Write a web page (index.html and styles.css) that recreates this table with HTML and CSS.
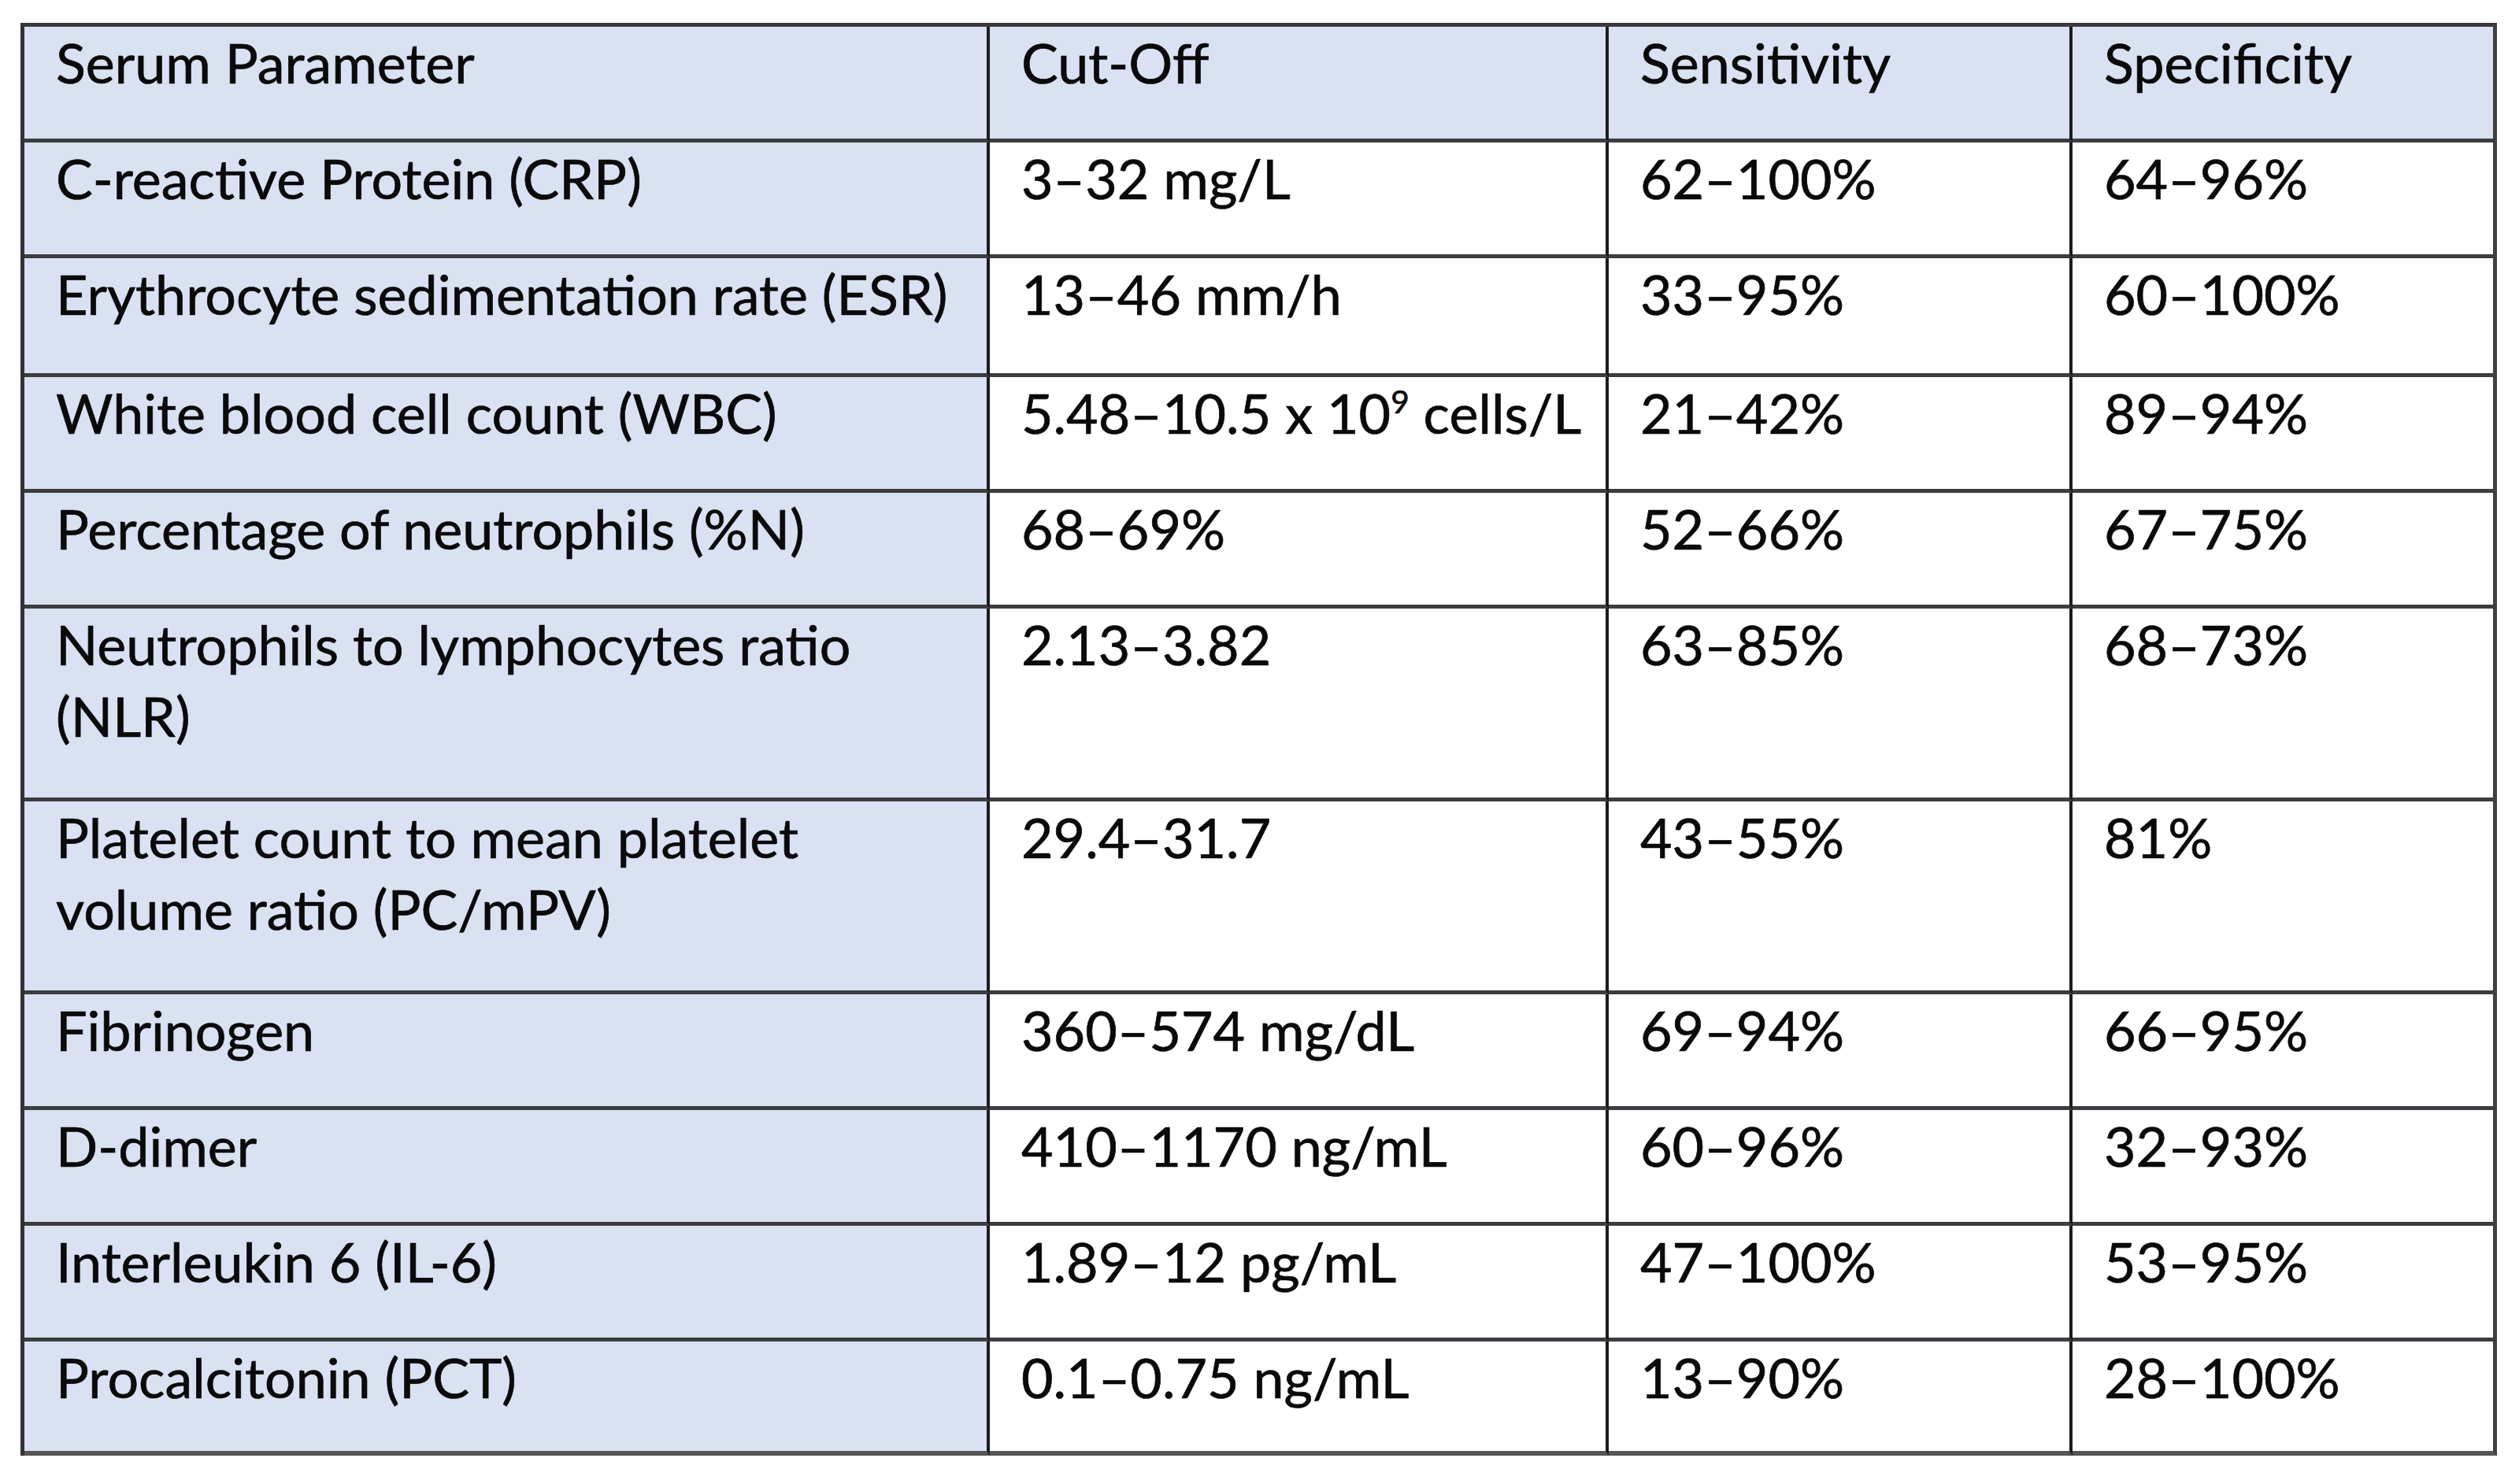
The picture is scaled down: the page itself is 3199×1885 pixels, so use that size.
FILE: index.html
```html
<!DOCTYPE html>
<html lang="en">
<head>
<meta charset="utf-8">
<title>Serum Parameters</title>
<link rel="stylesheet" href="styles.css">
</head>
<body>
<main class="page">
  <table class="params">
    <colgroup>
      <col class="c-param">
      <col class="c-cut">
      <col class="c-sens">
      <col class="c-spec">
    </colgroup>
    <thead>
      <tr>
        <th>Serum Parameter</th>
        <th>Cut-Off</th>
        <th>Sensitivity</th>
        <th>Specificity</th>
      </tr>
    </thead>
    <tbody>
      <tr>
        <td>C-reactive Protein (CRP)</td>
        <td>3–32 mg/L</td>
        <td>62–100%</td>
        <td>64–96%</td>
      </tr>
      <tr class="wide">
        <td>Erythrocyte sedimentation rate (ESR)</td>
        <td>13–46 mm/h</td>
        <td>33–95%</td>
        <td>60–100%</td>
      </tr>
      <tr>
        <td>White blood cell count (WBC)</td>
        <td>5.48–10.5 x 10<sup class="exp">9</sup> cells/L</td>
        <td>21–42%</td>
        <td>89–94%</td>
      </tr>
      <tr>
        <td>Percentage of neutrophils (%N)</td>
        <td>68–69%</td>
        <td>52–66%</td>
        <td>67–75%</td>
      </tr>
      <tr class="tall">
        <td>Neutrophils to lymphocytes ratio (NLR)</td>
        <td>2.13–3.82</td>
        <td>63–85%</td>
        <td>68–73%</td>
      </tr>
      <tr class="tall">
        <td>Platelet count to mean platelet volume ratio (PC/mPV)</td>
        <td>29.4–31.7</td>
        <td>43–55%</td>
        <td>81%</td>
      </tr>
      <tr>
        <td>Fibrinogen</td>
        <td>360–574 mg/dL</td>
        <td>69–94%</td>
        <td>66–95%</td>
      </tr>
      <tr>
        <td>D-dimer</td>
        <td>410–1170 ng/mL</td>
        <td>60–96%</td>
        <td>32–93%</td>
      </tr>
      <tr>
        <td>Interleukin 6 (IL-6)</td>
        <td>1.89–12 pg/mL</td>
        <td>47–100%</td>
        <td>53–95%</td>
      </tr>
      <tr class="last">
        <td>Procalcitonin (PCT)</td>
        <td>0.1–0.75 ng/mL</td>
        <td>13–90%</td>
        <td>28–100%</td>
      </tr>
    </tbody>
  </table>
</main>
</body>
</html>
```

FILE: styles.css
```css
html, body {
  margin: 0;
  padding: 0;
  background: #ffffff;
}

.page {
  padding: 29px 0 0 26px;
}

.params {
  border-collapse: separate;
  border-spacing: 0;
  table-layout: fixed;
  width: 3145px;
  border-top: 5px solid #3a3a3c;
  border-left: 5px solid #333333;
  font-family: Lato, "Open Sans", "Liberation Sans", sans-serif;
  font-size: 70px;
  line-height: 91px;
  color: #0a0a0a;
  -webkit-text-stroke: 0.7px #0a0a0a;
}

.c-param { width: 1226px; }
.c-cut   { width: 786px; }
.c-sens  { width: 589px; }
.c-spec  { width: 539px; }

.params th,
.params td {
  font-weight: 400;
  text-align: left;
  vertical-align: top;
  padding: 0 20px 0 40px;
  height: 142px;
  border-bottom: 5px solid #3c3d40;
  border-right: 4px solid #1c1c1c;
  background: #ffffff;
}

.params th:last-child,
.params td:last-child {
  border-right: 5px solid #404040;
}

.params tr.last td {
  height: 139px;
  border-bottom: 6px solid #555555;
}

.params thead th {
  background: #d9e1f2;
}

.params tbody td:first-child {
  background: #d9e1f2;
}

.params tr.wide td {
  height: 146px;
}

.params tr.tall td {
  height: 240px;
}

.exp {
  font-size: 0.58em;
  line-height: 0;
  vertical-align: 0.65em;
}
```
